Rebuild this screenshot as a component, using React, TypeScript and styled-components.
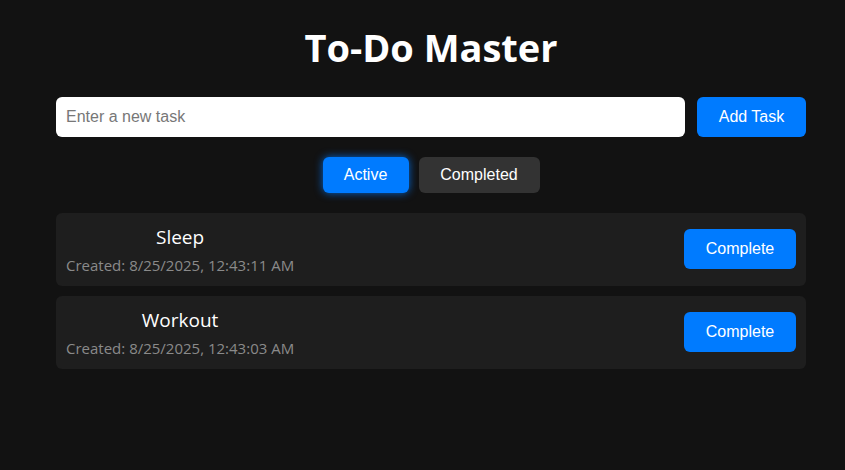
import React, { useState } from "react";
import styled, { createGlobalStyle } from "styled-components";

const Global = createGlobalStyle`
  html, body { margin: 0; padding: 0; background: #121212; }
  body { font-family: "Open Sans", "Noto Sans", sans-serif; color: #fff; }
  * { box-sizing: border-box; }
`;

const Page = styled.div`
  min-height: 470px;
  padding: 22px 39px 0 56px;
`;

const Container = styled.div`
  width: 750px;
  display: flex;
  flex-direction: column;
`;

const Title = styled.h1`
  margin: 0 0 25px;
  text-align: center;
  font-family: "Open Sans", sans-serif;
  font-weight: 700;
  font-size: 38px;
  line-height: 50px;
  color: #fff;
`;

const InputRow = styled.div`
  display: flex;
  gap: 12px;
`;

const TaskInput = styled.input`
  flex: 1;
  height: 40px;
  border: none;
  border-radius: 6px;
  padding: 0 10px;
  font-family: "Liberation Sans", Arial, sans-serif;
  font-size: 16px;
  color: #222;
  background: #fff;
  outline: none;
  &::placeholder { color: #777; }
`;

const BlueButton = styled.button<{ $w: number; $h: number }>`
  width: ${(p) => p.$w}px;
  height: ${(p) => p.$h}px;
  border: none;
  border-radius: 6px;
  background: #007bff;
  color: #fff;
  font-family: "Liberation Sans", Arial, sans-serif;
  font-size: 16px;
  cursor: pointer;
  flex-shrink: 0;
`;

const CompleteButton = styled(BlueButton)`
  align-self: flex-start;
  margin-top: 4px;
`;

const Filters = styled.div`
  display: flex;
  justify-content: center;
  gap: 10px;
  margin: 20px 0 20px;
`;

const FilterButton = styled.button<{ $active?: boolean; $w: number }>`
  width: ${(p) => p.$w}px;
  height: 36px;
  border: none;
  border-radius: 6px;
  background: ${(p) => (p.$active ? "#007bff" : "#333")};
  box-shadow: ${(p) => (p.$active ? "0 0 8px rgba(0,123,255,0.8)" : "none")};
  color: #fff;
  font-family: "Liberation Sans", Arial, sans-serif;
  font-size: 16px;
  cursor: pointer;
`;

const List = styled.div`
  display: flex;
  flex-direction: column;
  gap: 10px;
`;

const Item = styled.div`
  display: flex;
  align-items: flex-start;
  justify-content: space-between;
  background: #1e1e1e;
  border-radius: 6px;
  padding: 12px 10px 10px;
  height: 73px;
`;

const Info = styled.div`
  display: flex;
  flex-direction: column;
  align-items: center;
  margin-top: -1px;
`;

const TaskName = styled.div`
  font-size: 19px;
  line-height: 26px;
  color: #fff;
`;

const TaskDate = styled.div`
  margin-top: 5px;
  font-size: 15px;
  line-height: 20px;
  color: #8a8a8a;
`;

const tasks = [
  { name: "Sleep", date: "8/25/2025, 12:43:11 AM" },
  { name: "Workout", date: "8/25/2025, 12:43:03 AM" },
];

export default function App() {
  const [text, setText] = useState("");
  return (
    <>
      <Global />
      <Page>
        <Container>
          <Title>To-Do Master</Title>
          <InputRow>
            <TaskInput
              placeholder="Enter a new task"
              value={text}
              onChange={(e) => setText(e.target.value)}
            />
            <BlueButton $w={109} $h={40}>Add Task</BlueButton>
          </InputRow>
          <Filters>
            <FilterButton $active $w={86}>Active</FilterButton>
            <FilterButton $w={121}>Completed</FilterButton>
          </Filters>
          <List>
            {tasks.map((t) => (
              <Item key={t.name}>
                <Info>
                  <TaskName>{t.name}</TaskName>
                  <TaskDate>Created: {t.date}</TaskDate>
                </Info>
                <CompleteButton $w={112} $h={40}>Complete</CompleteButton>
              </Item>
            ))}
          </List>
        </Container>
      </Page>
    </>
  );
}
